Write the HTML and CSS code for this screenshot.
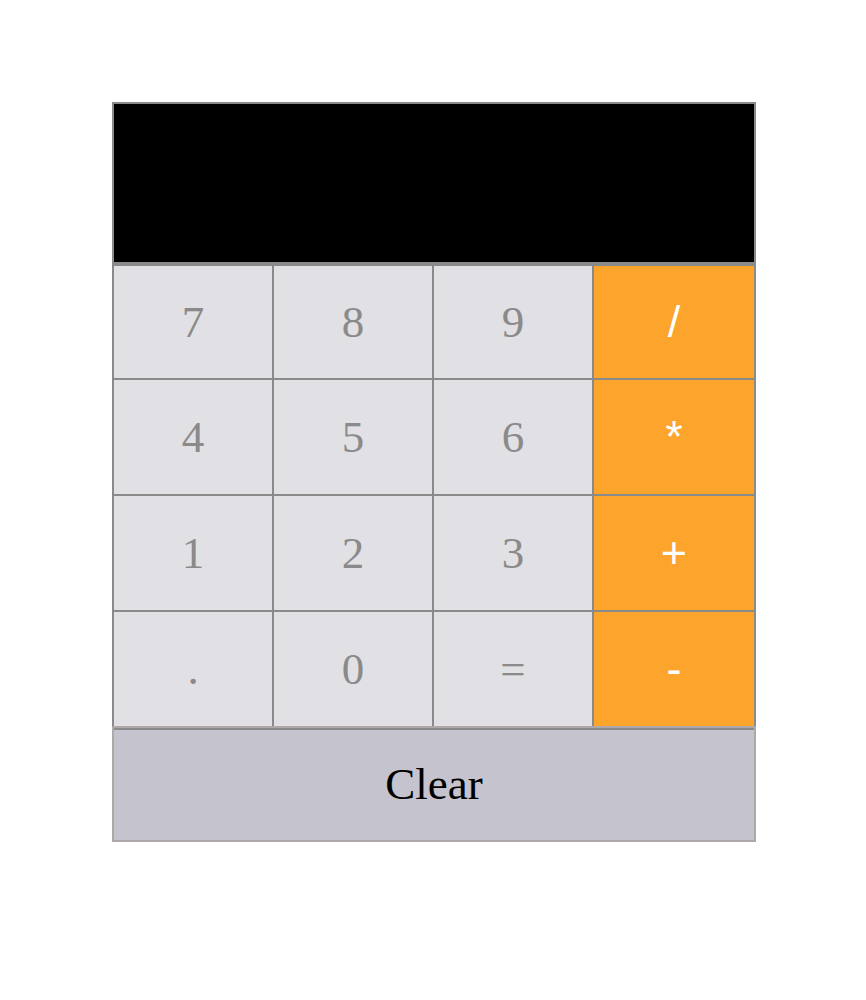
FILE: index.html
```html
<!DOCTYPE html>
<html lang="en">
<head>
<meta charset="utf-8">
<title>Calculator</title>
<link rel="stylesheet" href="styles.css">
</head>
<body>
<div class="calc">
  <div class="top">
    <div class="screen"></div>
    <div class="keys">
      <button class="key">7</button>
      <button class="key">8</button>
      <button class="key">9</button>
      <button class="key op">/</button>
      <button class="key">4</button>
      <button class="key">5</button>
      <button class="key">6</button>
      <button class="key op">*</button>
      <button class="key">1</button>
      <button class="key">2</button>
      <button class="key">3</button>
      <button class="key op">+</button>
      <button class="key">.</button>
      <button class="key">0</button>
      <button class="key">=</button>
      <button class="key op">-</button>
    </div>
  </div>
  <button class="clear">Clear</button>
</div>
</body>
</html>
```
FILE: styles.css
```css
html, body {
  margin: 0;
  padding: 0;
  background: #ffffff;
}

.calc {
  width: 644px;
  margin: 102px 0 0 112px;
}

.top {
  background: #8a8a8a;
  padding: 2px 2px 0 2px;
}

.screen {
  height: 158px;
  background: #000000;
  margin-bottom: 4px;
}

.keys {
  display: grid;
  grid-template-columns: 158px 158px 158px 160px;
  grid-template-rows: 112px 114px 114px 114px;
  gap: 2px;
}

.key {
  border: none;
  margin: 0;
  padding: 0;
  background: #e0e0e5;
  color: #8a8a8a;
  font-family: "Liberation Serif", "Times New Roman", serif;
  font-size: 45px;
  display: flex;
  align-items: center;
  justify-content: center;
}

.op {
  background: #fca42c;
  color: #ffffff;
  font-family: "Liberation Sans", Arial, sans-serif;
}

.clear {
  display: block;
  box-sizing: border-box;
  width: 644px;
  height: 116px;
  margin: 0;
  padding: 0;
  border: 2px solid #aea8a9;
  box-shadow: inset 0 2px 0 #8a8a8a;
  background: #c5c3cd;
  color: #000000;
  font-family: "Liberation Serif", "Times New Roman", serif;
  font-size: 45px;
}
```
